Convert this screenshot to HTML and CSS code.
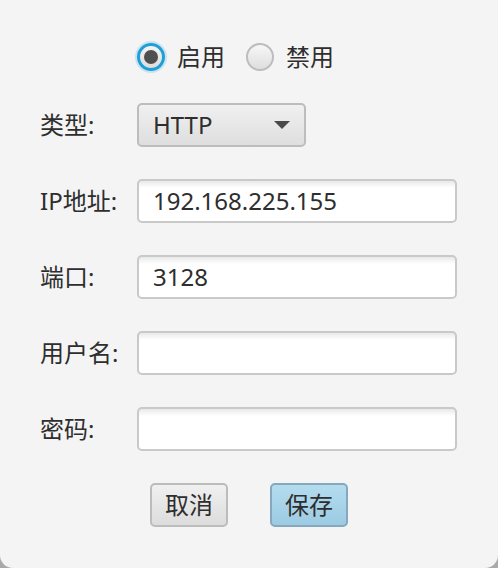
FILE: index.html
```html
<!DOCTYPE html>
<html lang="zh">
<head>
<meta charset="utf-8">
<link rel="stylesheet" href="styles.css">
</head>
<body>
<div class="window">
  <div class="radio-row">
    <label class="radio">
      <span class="radio-dot checked"><span class="dot"></span></span>
      <span class="radio-text">启用</span>
    </label>
    <label class="radio">
      <span class="radio-dot"></span>
      <span class="radio-text">禁用</span>
    </label>
  </div>
  <div class="form">
    <div class="label">类型:</div>
    <div class="combo">
      <span class="combo-text">HTTP</span>
      <span class="arrow"></span>
    </div>

    <div class="label">IP地址:</div>
    <div class="field">192.168.225.155</div>

    <div class="label">端口:</div>
    <div class="field">3128</div>

    <div class="label">用户名:</div>
    <div class="field"></div>

    <div class="label">密码:</div>
    <div class="field"></div>
  </div>
  <div class="buttons">
    <div class="btn">取消</div>
    <div class="btn default">保存</div>
  </div>
</div>
</body>
</html>
```
FILE: styles.css
```css
html, body {
  margin: 0;
  padding: 0;
  background: #a9a9a9;
}
body {
  width: 498px;
  height: 568px;
  overflow: hidden;
  font-family: "Noto Sans", "Noto Sans CJK SC", sans-serif;
  color: #2e2e2e;
  font-size: 24px;
}
.window {
  box-sizing: border-box;
  width: 498px;
  height: 568px;
  background: #f4f4f4;
  border-radius: 0 0 13px 13px;
  padding: 35px 41px 0 40px;
}
.radio-row {
  display: flex;
  align-items: center;
  height: 44px;
  padding-left: 97px;
  margin-bottom: 24px;
}
.radio {
  display: flex;
  align-items: center;
  margin-right: 21px;
}
.radio-dot {
  box-sizing: border-box;
  width: 28px;
  height: 28px;
  border-radius: 50%;
  border: 2px solid #bdbdbd;
  background: linear-gradient(#f7f7f7, #dedede);
  display: flex;
  align-items: center;
  justify-content: center;
  margin-right: 12px;
}
.radio-dot.checked {
  border: 3px solid #1e9fd8;
  box-shadow: 0 0 0 2px rgba(60, 170, 225, 0.22);
  background: linear-gradient(#f4f4f4, #dcdcdc);
}
.dot {
  width: 14px;
  height: 14px;
  border-radius: 50%;
  background: #4f4f4f;
}
.radio-text {
  line-height: 44px;
}
.form {
  display: grid;
  grid-template-columns: 97px 1fr;
  grid-auto-rows: 44px;
  row-gap: 32px;
  align-items: center;
}
.label {
  line-height: 44px;
  white-space: nowrap;
}
.field {
  box-sizing: border-box;
  height: 44px;
  border: 2px solid #c9c9c9;
  border-radius: 5px;
  background: linear-gradient(#e9e9e9 0, #ffffff 7px);
  padding: 0 14px;
  line-height: 40px;
}
.combo {
  box-sizing: border-box;
  width: 169px;
  height: 44px;
  border: 2px solid #bdbdbd;
  border-radius: 5px;
  background: linear-gradient(#f0f0f0, #dedede);
  padding: 0 14px;
  display: flex;
  align-items: center;
  justify-content: space-between;
}
.combo-text {
  line-height: 40px;
}
.arrow {
  width: 0;
  height: 0;
  border-left: 8px solid transparent;
  border-right: 8px solid transparent;
  border-top: 8px solid #4a4a4a;
}
.buttons {
  display: flex;
  justify-content: center;
  gap: 42px;
  margin-top: 32px;
  padding-left: 1px;
}
.btn {
  box-sizing: border-box;
  width: 78px;
  height: 44px;
  border: 2px solid #bcbcbc;
  border-radius: 5px;
  background: linear-gradient(#f0f0f0, #dcdcdc);
  text-align: center;
  line-height: 40px;
}
.btn.default {
  border-color: #86a8bf;
  background: linear-gradient(#b4dcef, #9ccbe2);
}
```
